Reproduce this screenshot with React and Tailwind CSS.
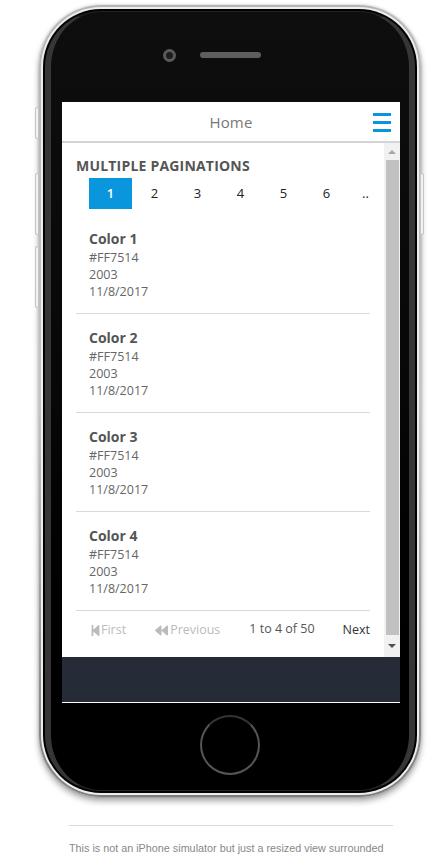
import React from 'react';
import { FaStepBackward, FaBackward } from 'react-icons/fa';

const colors = ['Color 1', 'Color 2', 'Color 3', 'Color 4'];
const pages = ['2', '3', '4', '5', '6'];

const ColorRow = ({ name }) => (
  <div className="h-[99px] pt-[14px] pl-[13px] border-b border-[#d9d9d9]">
    <div className="text-[14px] leading-[19px] mb-[1px] font-bold text-[#555]">{name}</div>
    <div className="text-[12.5px] leading-[17px] text-[#666]">#FF7514</div>
    <div className="text-[12.5px] leading-[17px] text-[#666]">2003</div>
    <div className="text-[12.5px] leading-[17px] text-[#666]">11/8/2017</div>
  </div>
);

const Scrollbar = () => (
  <div className="w-[16px] shrink-0 bg-[#f1f1f1] flex flex-col items-center">
    <div className="h-[17px] flex items-center justify-center">
      <div className="w-0 h-0 border-x-[4px] border-x-transparent border-b-[4px] border-b-[#a3a3a3]" />
    </div>
    <div className="w-[13px] h-[475px] bg-[#c1c1c1]" />
    <div className="flex-1 flex items-center justify-center">
      <div className="w-0 h-0 border-x-[4px] border-x-transparent border-t-[4px] border-t-[#505050]" />
    </div>
  </div>
);

const Screen = () => (
  <div className="w-[338px] h-[601px] shrink-0 bg-white flex flex-col font-['Open_Sans',sans-serif]">
    {/* Header */}
    <div className="h-[41px] shrink-0 relative flex items-center justify-center pt-[1px] border-b-2 border-[#d4d4d4]">
      <span className="text-[15px] tracking-[0.2px] text-[#777]">Home</span>
      <div className="absolute right-[9px] top-[11px] flex flex-col gap-[5px]">
        <div className="w-[18px] h-[3px] bg-[#0a96dc]" />
        <div className="w-[18px] h-[3px] bg-[#0a96dc]" />
        <div className="w-[18px] h-[3px] bg-[#0a96dc]" />
      </div>
    </div>

    {/* Content */}
    <div className="h-[514px] shrink-0 flex">
      <div className="flex-1 min-w-0 pl-[14px] pr-[14px] pt-[13px] overflow-hidden">
        <div className="text-[14px] leading-[20px] font-bold tracking-[0.2px] text-[#555] whitespace-nowrap">
          MULTIPLE PAGINATIONS
        </div>
        <div className="flex ml-[13px] mt-[2px] h-[31px] text-[13px] text-[#222]">
          <div className="w-[43px] shrink-0 bg-[#0a96dc] text-white font-semibold flex items-center justify-center">1</div>
          {pages.map((p) => (
            <div key={p} className="w-[43px] shrink-0 pl-[2px] flex items-center justify-center">{p}</div>
          ))}
          <div className="w-[37px] shrink-0 flex items-center justify-center">..</div>
        </div>
        <div className="mt-[6px]">
          {colors.map((c) => (
            <ColorRow key={c} name={c} />
          ))}
        </div>
        <div className="flex items-center h-[37px] pt-[1px] text-[12.5px] whitespace-nowrap">
          <div className="flex items-center text-[#bbb] ml-[14px]">
            <FaStepBackward className="w-[11px] h-[13px]" />
            <span>First</span>
          </div>
          <div className="flex items-center text-[#bbb] ml-[29px] gap-[2px]">
            <FaBackward className="w-[13px] h-[13px]" />
            <span>Previous</span>
          </div>
          <span className="ml-[29px] text-[#555] -mt-[2px]">1 to 4 of 50</span>
          <span className="ml-auto text-[#333]">Next</span>
        </div>
      </div>
      <Scrollbar />
    </div>

    {/* Footer */}
    <div className="flex-1 bg-[#252c37] border-b border-white" />
  </div>
);

const SideButton = ({ className }) => (
  <div className={`absolute w-[4px] rounded-[2px] border border-[#c4c4c4] bg-[#f2f2f2] ${className}`} />
);

export default function App() {
  return (
    <div className="w-[442px] h-[858px] bg-white overflow-hidden">
      {/* Phone body */}
      <div className="relative ml-[39px] mt-[5px] w-[382px] h-[792px] rounded-[62px] bg-gradient-to-b from-[#b5b5b5] via-[#c4c4c4] to-[#7d7d7d] p-[2px] shadow-[0_4px_6px_rgba(0,0,0,0.35),0_0_3px_rgba(0,0,0,0.2)]">
        <SideButton className="left-[-4px] top-[102px] h-[32px]" />
        <SideButton className="left-[-4px] top-[168px] h-[62px]" />
        <SideButton className="left-[-4px] top-[241px] h-[62px]" />
        <SideButton className="right-[-3px] top-[168px] h-[62px]" />

        <div className="h-full rounded-[60px] bg-[#ececec] p-[2px]">
          <div className="h-full rounded-[58px] bg-black p-[2px]">
            <div className="h-full rounded-[56px] border-x-[6px] border-y-[1px] border-x-[#363636] border-y-[#222] bg-gradient-to-b from-[#0e0e0e] via-[#070707] to-black flex flex-col items-center pl-[2px]">
              {/* Camera and speaker */}
              <div className="h-[90px] shrink-0 flex items-start justify-center gap-[24px] pt-[37px] pr-[38px]">
                <div className="w-[13px] h-[13px] rounded-full bg-[#5a5a5a] flex items-center justify-center">
                  <div className="w-[7px] h-[7px] rounded-full bg-[#1d1d1d]" />
                </div>
                <div className="w-[61px] h-[6px] mt-[3px] rounded-full bg-[#5e5e5e]" />
              </div>
              <Screen />
              {/* Home button */}
              <div className="mt-[12px] mr-[2px] w-[60px] h-[60px] rounded-full border-[2px] border-[#555] border-t-[#333]" />
            </div>
          </div>
        </div>
      </div>

      {/* Note below the phone */}
      <div className="ml-[69px] mt-[28px] w-[324px] border-t border-[#d9d9d9] pt-[15px] text-[10.8px] leading-[14px] text-[#888] whitespace-nowrap font-['Liberation_Sans',sans-serif]">
        This is not an iPhone simulator but just a resized view surrounded
      </div>
    </div>
  );
}
